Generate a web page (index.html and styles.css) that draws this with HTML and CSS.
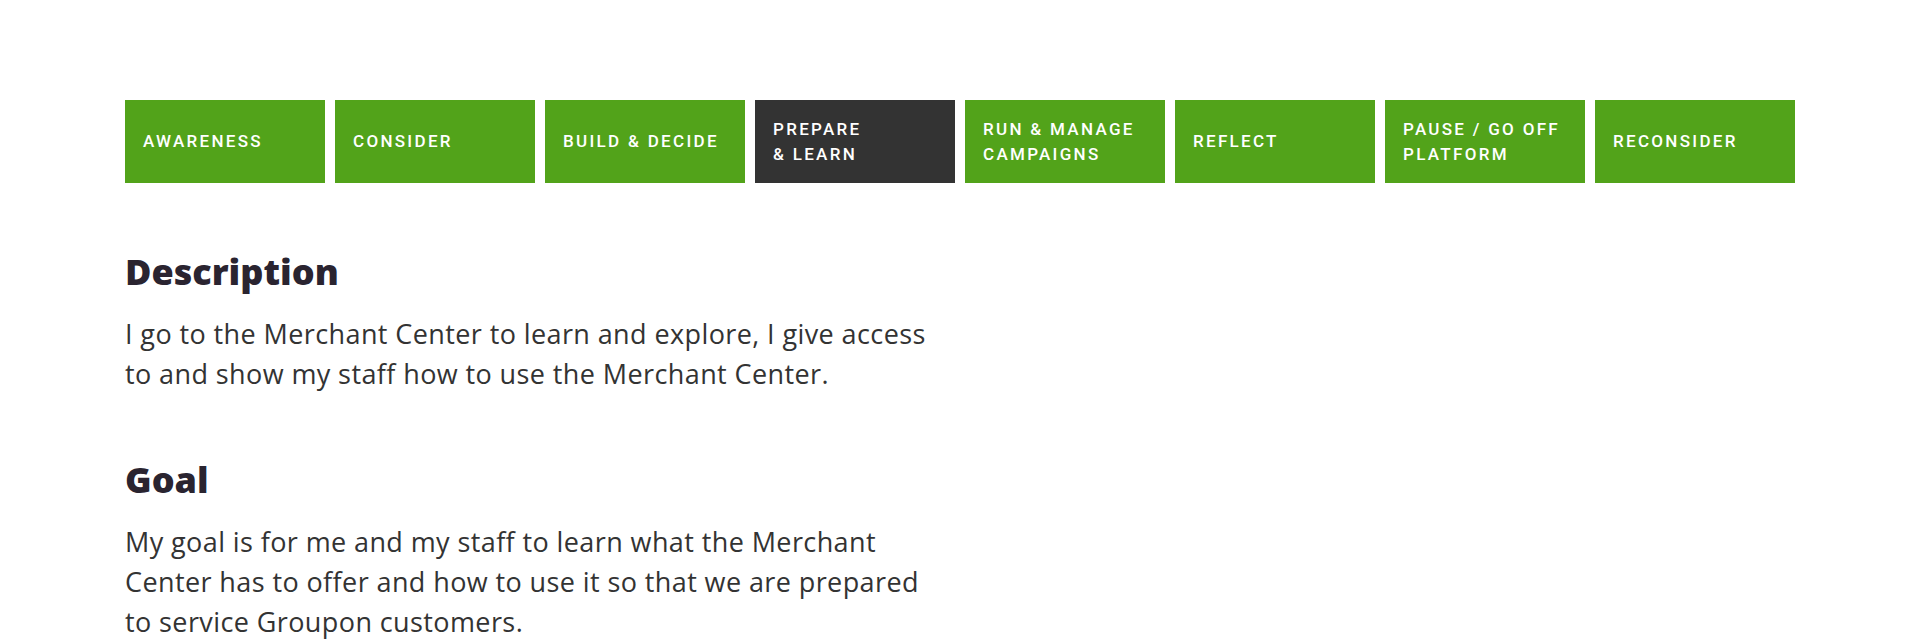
FILE: index.html
```html
<!DOCTYPE html>
<html lang="en">
<head>
<meta charset="utf-8">
<title>Merchant Journey</title>
<link rel="stylesheet" href="styles.css">
</head>
<body>
<main class="page">
  <nav class="stages">
    <div class="stage">AWARENESS</div>
    <div class="stage">CONSIDER</div>
    <div class="stage">BUILD &amp; DECIDE</div>
    <div class="stage stage-active">PREPARE<br>&amp; LEARN</div>
    <div class="stage">RUN &amp; MANAGE<br>CAMPAIGNS</div>
    <div class="stage">REFLECT</div>
    <div class="stage">PAUSE / GO OFF<br>PLATFORM</div>
    <div class="stage">RECONSIDER</div>
  </nav>
  <section class="content">
    <div class="block">
      <h2 class="block-title">Description</h2>
      <p class="block-text">I go to the Merchant Center to learn and explore, I give access to and show my staff how to use the Merchant Center.</p>
    </div>
    <div class="block">
      <h2 class="block-title">Goal</h2>
      <p class="block-text">My goal is for me and my staff to learn what the Merchant Center has to offer and how to use it so that we are prepared to service Groupon customers.</p>
    </div>
  </section>
</main>
</body>
</html>
```

FILE: styles.css
```css
* { box-sizing: border-box; }
html, body { margin: 0; padding: 0; background: #ffffff; }
body { font-family: "Open Sans", "Liberation Sans", sans-serif; color: #333333; }

.page {
  width: 1670px;
  margin: 0 auto;
  padding-top: 100px;
}

.stages {
  display: flex;
  gap: 10px;
}

.stage {
  width: 200px;
  height: 83px;
  flex: 0 0 200px;
  display: flex;
  align-items: center;
  padding: 0 18px;
  background: #52a31a;
  color: #ffffff;
  font-family: Roboto, "Liberation Sans", sans-serif;
  font-weight: 500;
  font-size: 17px;
  line-height: 25px;
  letter-spacing: 2.3px;
}

.stage-active { background: #333333; }

.content {
  width: 820px;
  padding-top: 69px;
  display: flex;
  flex-direction: column;
  gap: 66px;
}

.block-title {
  margin: 0 0 22px;
  font-family: "Open Sans", "Liberation Sans", sans-serif;
  font-weight: 800;
  font-size: 36px;
  line-height: 40px;
  color: #2a2430;
}

.block-text {
  margin: 0;
  font-size: 27px;
  line-height: 40px;
  letter-spacing: 0.4px;
  color: #333333;
}
```
